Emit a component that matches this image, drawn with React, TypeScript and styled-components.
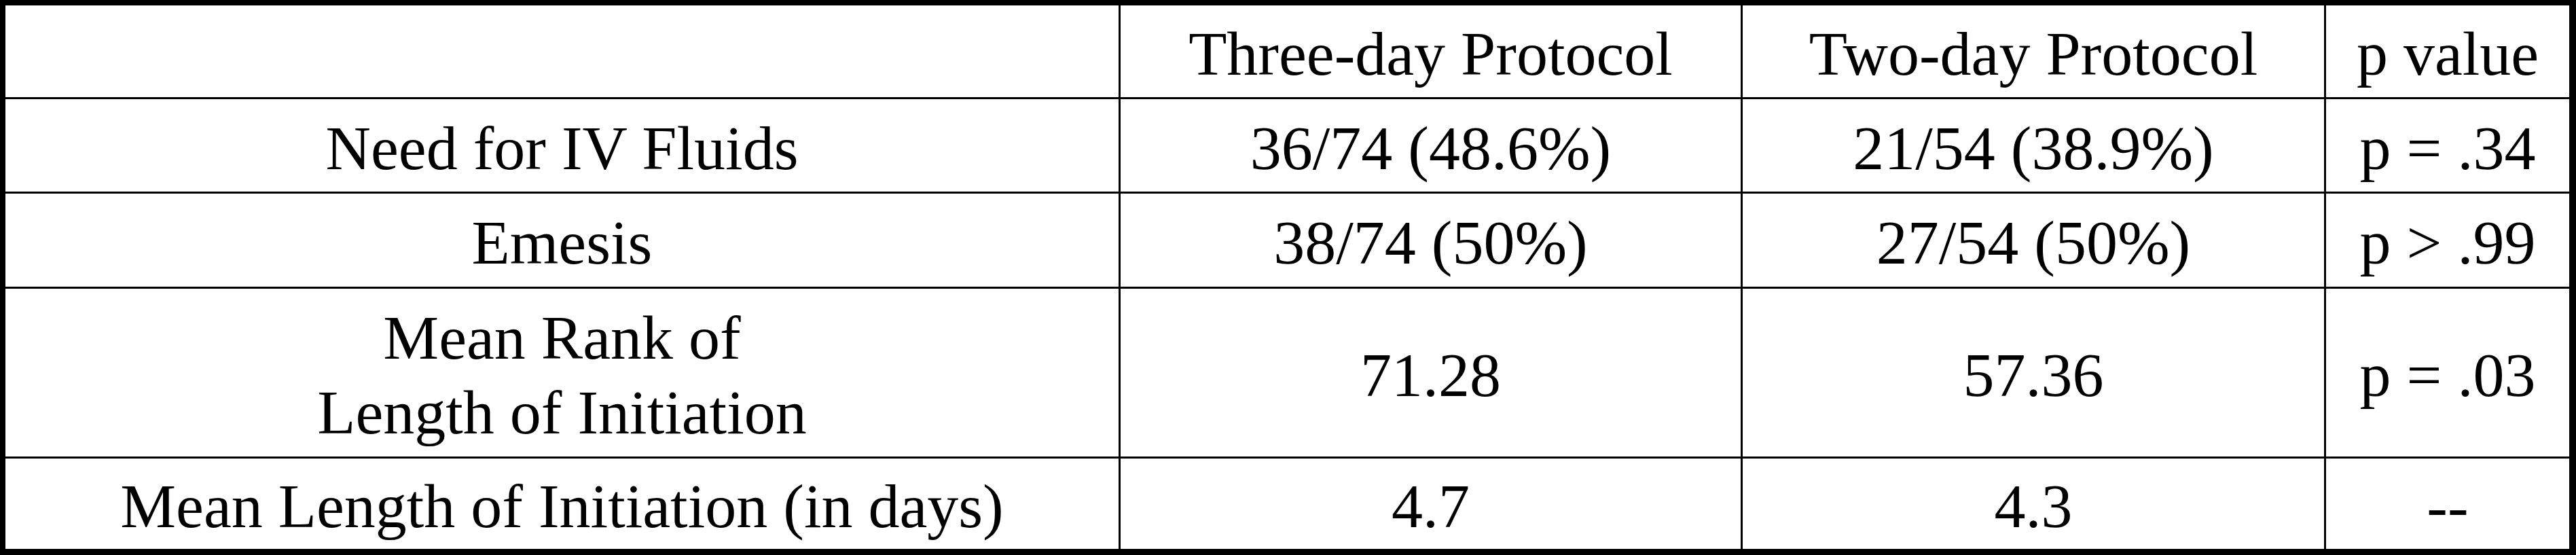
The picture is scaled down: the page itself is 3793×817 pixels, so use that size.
import React from "react";
import styled, { createGlobalStyle } from "styled-components";

const line = "#000";
const gridLine = 3;

const GlobalStyle = createGlobalStyle`
  html, body {
    margin: 0;
    padding: 0;
    background: #fff;
  }
`;

const Table = styled.div`
  display: grid;
  grid-template-columns: 1639px 913px 856px 358px;
  grid-template-rows: 135px 136px 137px 247px 133px;
  gap: ${gridLine}px;
  width: max-content;
  background: ${line};
  border-style: solid;
  border-color: ${line};
  border-width: 8px 10px 9px 8px;
  font-family: "Liberation Serif", "Times New Roman", serif;
  font-size: 92px;
  color: #000;
`;

const Cell = styled.div<{ tall?: boolean }>`
  display: flex;
  align-items: center;
  justify-content: center;
  box-sizing: border-box;
  padding-top: 7px;
  background: #fff;
  text-align: center;
  white-space: nowrap;
  line-height: ${({ tall }) => (tall ? "110px" : "normal")};
`;

type Row = {
  label: React.ReactNode;
  three: string;
  two: string;
  p: string;
  tall?: boolean;
};

const rows: Row[] = [
  { label: "Need for IV Fluids", three: "36/74 (48.6%)", two: "21/54 (38.9%)", p: "p = .34" },
  { label: "Emesis", three: "38/74 (50%)", two: "27/54 (50%)", p: "p > .99" },
  {
    label: (
      <>
        Mean Rank of
        <br />
        Length of Initiation
      </>
    ),
    three: "71.28",
    two: "57.36",
    p: "p = .03",
    tall: true,
  },
  { label: "Mean Length of Initiation (in days)", three: "4.7", two: "4.3", p: "--" },
];

export default function App() {
  return (
    <>
      <GlobalStyle />
      <Table>
        <Cell />
        <Cell>Three-day Protocol</Cell>
        <Cell>Two-day Protocol</Cell>
        <Cell>p value</Cell>
        {rows.map((r, i) => (
          <React.Fragment key={i}>
            <Cell tall={r.tall}>{r.label}</Cell>
            <Cell>{r.three}</Cell>
            <Cell>{r.two}</Cell>
            <Cell>{r.p}</Cell>
          </React.Fragment>
        ))}
      </Table>
    </>
  );
}
